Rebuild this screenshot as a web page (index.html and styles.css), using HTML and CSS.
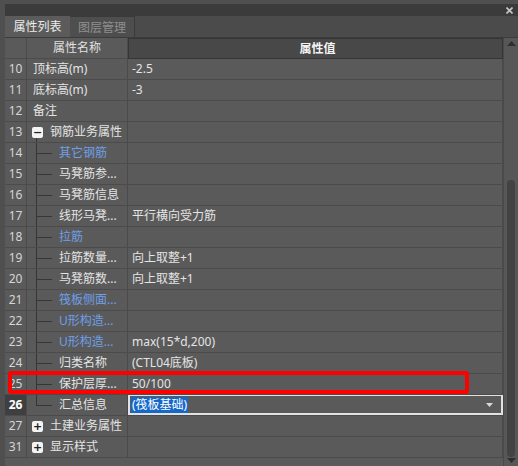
FILE: index.html
```html
<!DOCTYPE html>
<html lang="zh-CN">
<head>
<meta charset="utf-8">
<title>属性列表</title>
<link rel="stylesheet" href="styles.css">
</head>
<body>
<div class="window">
  <div class="titlebar">
    <svg class="close" width="7" height="7" viewBox="0 0 7 7"><path d="M0.5 0.5L6.5 6.5M6.5 0.5L0.5 6.5" stroke="#c8c8c8" stroke-width="1.6"/></svg>
  </div>
  <div class="tabs">
    <div class="tab active">属性列表</div>
    <div class="tab">图层管理</div>
  </div>
  <div class="body">
    <div class="grid">
      <div class="row head"><div class="num"></div><div class="name">属性名称</div><div class="val">属性值</div></div>
      <div class="row"><div class="num">10</div><div class="name">顶标高(m)</div><div class="val">-2.5</div></div>
      <div class="row"><div class="num">11</div><div class="name">底标高(m)</div><div class="val">-3</div></div>
      <div class="row"><div class="num">12</div><div class="name">备注</div><div class="val"></div></div>
      <div class="row"><div class="num">13</div><div class="name group open"><span class="tog">−</span>钢筋业务属性</div><div class="val"></div></div>
      <div class="row"><div class="num">14</div><div class="name child blue">其它钢筋</div><div class="val"></div></div>
      <div class="row"><div class="num">15</div><div class="name child">马凳筋参...</div><div class="val"></div></div>
      <div class="row"><div class="num">16</div><div class="name child">马凳筋信息</div><div class="val"></div></div>
      <div class="row"><div class="num">17</div><div class="name child">线形马凳...</div><div class="val">平行横向受力筋</div></div>
      <div class="row"><div class="num">18</div><div class="name child blue">拉筋</div><div class="val"></div></div>
      <div class="row"><div class="num">19</div><div class="name child">拉筋数量...</div><div class="val">向上取整+1</div></div>
      <div class="row"><div class="num">20</div><div class="name child">马凳筋数...</div><div class="val">向上取整+1</div></div>
      <div class="row"><div class="num">21</div><div class="name child blue">筏板侧面...</div><div class="val"></div></div>
      <div class="row"><div class="num">22</div><div class="name child blue">U形构造...</div><div class="val"></div></div>
      <div class="row"><div class="num">23</div><div class="name child blue">U形构造...</div><div class="val">max(15*d,200)</div></div>
      <div class="row"><div class="num">24</div><div class="name child">归类名称</div><div class="val">(CTL04底板)</div></div>
      <div class="row"><div class="num">25</div><div class="name child">保护层厚...</div><div class="val">50/100</div></div>
      <div class="row current"><div class="num">26</div><div class="name child last">汇总信息</div><div class="val"><div class="editor"><span class="sel">(筏板基础)</span><svg class="drop" width="7" height="4" viewBox="0 0 7 4"><path d="M0 0H7L3.5 4Z" fill="#d8d8d8"/></svg></div></div></div>
      <div class="row"><div class="num">27</div><div class="name group"><span class="tog">+</span>土建业务属性</div><div class="val"></div></div>
      <div class="row"><div class="num">31</div><div class="name group"><span class="tog">+</span>显示样式</div><div class="val"></div></div>
    </div>
    <div class="scrollbar">
      <svg class="arrow" width="9" height="5" viewBox="0 0 9 5"><path d="M0 5H9L4.5 0Z" fill="#2e2e2e"/></svg>
      <div class="track"><div class="thumb"></div></div>
      <svg class="arrow" width="9" height="5" viewBox="0 0 9 5"><path d="M0 0H9L4.5 5Z" fill="#2e2e2e"/></svg>
    </div>
  </div>
  <div class="highlight"></div>
</div>
</body>
</html>
```

FILE: styles.css
```css
* { box-sizing: border-box; }
html, body { margin: 0; padding: 0; }
body {
  width: 518px;
  height: 466px;
  overflow: hidden;
  background: #4f4f4f;
  font-family: "Noto Sans", "Noto Sans CJK SC", sans-serif;
  font-size: 12px;
  color: #e4e4e4;
}
.window {
  position: relative;
  height: 466px;
  padding: 4px 0 0 5px;
  display: flex;
  flex-direction: column;
}
.titlebar {
  height: 12px;
  background: #3b3b3b;
  display: flex;
  justify-content: flex-end;
  align-items: center;
  padding-right: 5px;
}
.tabs {
  height: 22px;
  background: #4b4b4b;
  display: flex;
  border-bottom: 1px solid #3c3c3c;
}
.tab {
  width: 65px;
  height: 21px;
  line-height: 21px;
  text-align: center;
  color: #8e8e8e;
  background: #4e4e4e;
  border: 1px solid #3a3a3a;
  border-bottom: none;
  border-left: none;
}
.tab.active {
  background: #5b5b5b;
  color: #ececec;
  border: none;
}
.body {
  flex: 1;
  display: flex;
  min-height: 0;
  background: #5a5a5a;
}
.grid {
  flex: 1;
  display: flex;
  flex-direction: column;
}
.row {
  display: grid;
  grid-template-columns: 22px 101px 1fr;
  height: 21px;
}
.row > div {
  border-bottom: 1px solid #4b4b4b;
  border-right: 1px solid #4b4b4b;
  line-height: 20px;
  white-space: nowrap;
  overflow: hidden;
}
.num {
  text-align: center;
  color: #d6d6d6;
}
.name {
  padding-left: 6px;
  display: flex;
  align-items: center;
}
.val {
  padding-left: 4px;
}
.head .name {
  justify-content: center;
  padding-left: 0;
  color: #e0e0e0;
}
.head .val {
  background: #484848;
  border: 1px solid #353535;
  text-align: center;
  font-weight: bold;
  color: #f4f4f4;
  line-height: 19px;
}
.name.child {
  padding-left: 32px;
  background-image:
    linear-gradient(#363636, #363636),
    linear-gradient(#363636, #363636);
  background-origin: border-box;
  background-repeat: no-repeat;
  background-size: 1px 100%, 16px 1px;
  background-position: 9px 0, 9px 10px;
}
.name.child.last {
  background-size: 1px 11px, 16px 1px;
}
.name.blue { color: #6f9fe8; }
.name.group {
  padding-left: 5px;
}
.name.group.open {
  background-image: linear-gradient(#363636, #363636);
  background-origin: border-box;
  background-repeat: no-repeat;
  background-size: 1px 6px;
  background-position: 9px 15px;
}
.tog {
  width: 11px;
  height: 11px;
  margin-right: 7px;
  background: #f4f4f4;
  border-radius: 2px;
  color: #202020;
  font-size: 11px;
  font-weight: bold;
  line-height: 11px;
  text-align: center;
  font-family: "DejaVu Sans", sans-serif;
}
.current .num {
  background: #3f3f3f;
  color: #ffffff;
  font-weight: bold;
}
.current .val {
  padding: 0;
  border-right: none;
}
.editor {
  height: 21px;
  margin-top: -1px;
  border: 2px solid #e2e2e2;
  display: flex;
  align-items: center;
  justify-content: space-between;
  padding: 0 8px 0 1px;
}
.sel {
  background: #1668c8;
  color: #ffffff;
  line-height: 16px;
  padding: 0 1px;
}
.drop { display: block; }
.scrollbar {
  width: 15px;
  background: #575757;
  border-left: 1px solid #494949;
  display: flex;
  flex-direction: column;
  align-items: center;
  padding: 3px 0 3px 0;
}
.arrow { display: block; flex: none; }
.track {
  flex: 1;
  width: 8px;
  padding-top: 134px;
  padding-bottom: 1px;
  display: flex;
  flex-direction: column;
}
.thumb {
  flex: 1;
  background: #434343;
  border-radius: 4px;
}
.close { display: block; }
.highlight {
  position: absolute;
  left: 8px;
  top: 371px;
  width: 461px;
  height: 23px;
  border: 4px solid #ff0000;
  border-radius: 3px;
  pointer-events: none;
}
```
